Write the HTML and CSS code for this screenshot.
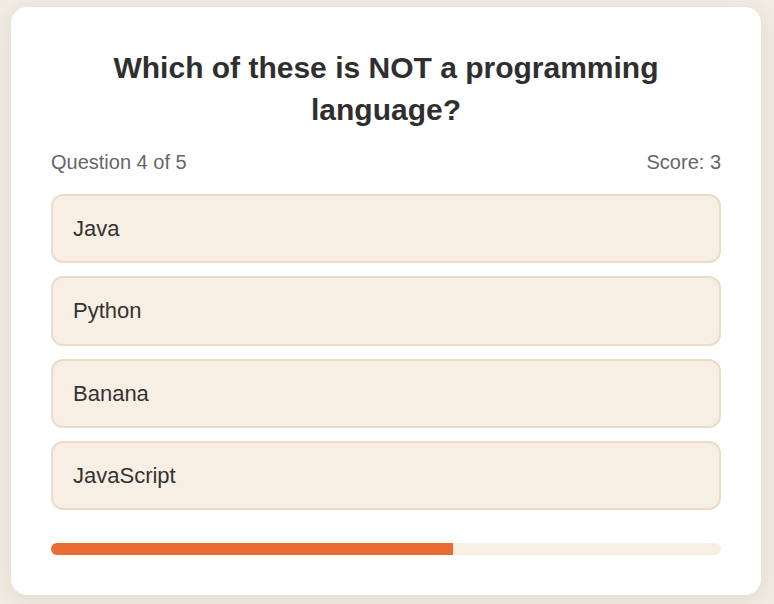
FILE: index.html
```html
<!DOCTYPE html>
<html lang="en">
<head>
<meta charset="utf-8">
<title>Quiz</title>
<link rel="stylesheet" href="styles.css">
</head>
<body>
<main class="card">
  <h1 class="question">Which of these is NOT a programming language?</h1>
  <div class="meta">
    <span>Question 4 of 5</span>
    <span>Score: 3</span>
  </div>
  <div class="options">
    <button class="option">Java</button>
    <button class="option">Python</button>
    <button class="option">Banana</button>
    <button class="option">JavaScript</button>
  </div>
  <div class="progress"><div class="progress-fill" style="width: 60%"></div></div>
</main>
</body>
</html>
```
FILE: styles.css
```css
* { box-sizing: border-box; }
html, body { margin: 0; padding: 0; }
body {
  min-height: 100vh;
  display: flex;
  align-items: center;
  justify-content: center;
  padding: 0 2px 2px 0;
  background: #f2ece4;
  font-family: "Liberation Sans", Arial, sans-serif;
  color: #333;
}
.card {
  width: 750px;
  background: #fff;
  border-radius: 16px;
  padding: 40px;
  box-shadow: 0 4px 24px rgba(80, 50, 20, 0.10);
}
.question {
  margin: 0;
  font-size: 30px;
  line-height: 1.4;
  font-weight: 700;
  text-align: center;
  color: #2f2f2f;
}
.meta {
  display: flex;
  justify-content: space-between;
  margin: 20px 0;
  font-size: 20px;
  color: #666;
}
.options {
  display: flex;
  flex-direction: column;
  gap: 13px;
}
.option {
  display: block;
  width: 100%;
  text-align: left;
  font-family: inherit;
  font-size: 22px;
  line-height: 25.3px;
  color: #333;
  background: #f8efe4;
  border: 2px solid #ecdcc7;
  border-radius: 12px;
  padding: 20px;
  margin: 0;
}
.progress {
  margin-top: 33px;
  height: 12px;
  border-radius: 6px;
  background: #f8efe4;
  overflow: hidden;
}
.progress-fill {
  height: 100%;
  background: #e86c33;
}
```
